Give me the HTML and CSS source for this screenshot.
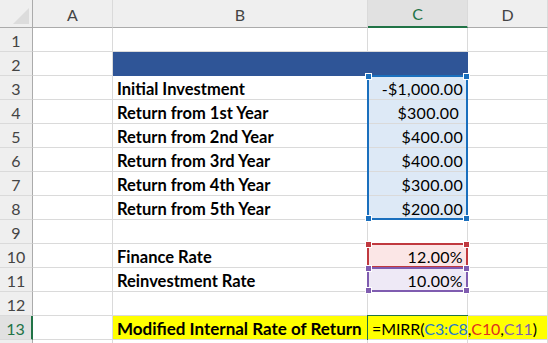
FILE: index.html
```html
<!DOCTYPE html>
<html lang="en">
<head>
    <meta charset="UTF-8">
    <title>MIRR - Sheet</title>
    <link rel="stylesheet" href="styles.css">
</head>
<body>
    <div class="sheet">
        <!-- column headers -->
        <div class="hd corner"><span class="tri"></span></div>
        <div class="hd">A</div>
        <div class="hd">B</div>
        <div class="hd active-col">C</div>
        <div class="hd">D</div>

        <div class="rh">1</div><div class="cell"></div><div class="cell"></div><div class="cell"></div><div class="cell"></div>

        <div class="rh">2</div><div class="cell"></div><div class="cell fill-blue"></div><div class="cell fill-blue"></div><div class="cell"></div>

        <div class="rh">3</div><div class="cell"></div><div class="cell label">Initial Investment</div><div class="cell num sel-blue">-$1,000.00</div><div class="cell"></div>
        <div class="rh">4</div><div class="cell"></div><div class="cell label">Return from 1st Year</div><div class="cell num sel-blue pad-more">$300.00</div><div class="cell"></div>
        <div class="rh">5</div><div class="cell"></div><div class="cell label">Return from 2nd Year</div><div class="cell num sel-blue">$400.00</div><div class="cell"></div>
        <div class="rh">6</div><div class="cell"></div><div class="cell label">Return from 3rd Year</div><div class="cell num sel-blue">$400.00</div><div class="cell"></div>
        <div class="rh">7</div><div class="cell"></div><div class="cell label">Return from 4th Year</div><div class="cell num sel-blue">$300.00</div><div class="cell"></div>
        <div class="rh">8</div><div class="cell"></div><div class="cell label">Return from 5th Year</div><div class="cell num sel-blue">$200.00</div><div class="cell"></div>

        <div class="rh">9</div><div class="cell"></div><div class="cell"></div><div class="cell"></div><div class="cell"></div>

        <div class="rh">10</div><div class="cell"></div><div class="cell label">Finance Rate</div><div class="cell num sel-red">12.00%</div><div class="cell"></div>
        <div class="rh">11</div><div class="cell"></div><div class="cell label">Reinvestment Rate</div><div class="cell num sel-purple">10.00%</div><div class="cell"></div>

        <div class="rh">12</div><div class="cell"></div><div class="cell"></div><div class="cell"></div><div class="cell"></div>

        <div class="rh active-row">13</div><div class="cell"></div><div class="cell label big hl">Modified Internal Rate of Return</div><div class="cell hl formula">=MIRR(<span class="ref-blue">C3:C8</span>,<span class="ref-red">C10</span>,<span class="ref-purple">C11</span>)</div><div class="cell hl-tail"></div>

        <div class="rh"></div><div class="cell"></div><div class="cell"></div><div class="cell"></div><div class="cell"></div>

        <!-- range outlines (lie over the cells) -->
        <div class="range range-blue">
            <i class="handle tl"></i><i class="handle tr"></i><i class="handle bl"></i><i class="handle br"></i>
        </div>
        <div class="range range-red">
            <i class="handle tl"></i><i class="handle tr"></i>
        </div>
        <div class="range range-purple">
            <i class="handle tl"></i><i class="handle tr"></i><i class="handle bl"></i><i class="handle br"></i>
        </div>
        <div class="edit-box"></div>
    </div>
</body>
</html>
```

FILE: styles.css
```css
:root {
    --grid: #dadada;
    --head-bg: #efefef;
    --head-line: #ababab;
    --excel-green: #217346;
    --blue: #1a6fbd;
    --red: #c0393f;
    --purple: #7f5cb0;
}

* {
    margin: 0;
    padding: 0;
    box-sizing: border-box;
}

body {
    font-family: "Lato", "Liberation Sans", sans-serif;
    background: #fff;
    color: #000;
    overflow: hidden;
}

.sheet {
    position: relative;
    display: grid;
    grid-template-columns: 33px 80px 255px 100px 1fr;
    grid-template-rows: 28px repeat(14, 24px);
    width: 548px;
    height: 343px;
    overflow: hidden;
}

.hd,
.rh {
    background: var(--head-bg);
    color: #444;
    font-size: 16px;
    display: flex;
    align-items: center;
    justify-content: center;
    padding-top: 1px;
}

.hd {
    border-right: 1px solid var(--grid);
    border-bottom: 1px solid var(--head-line);
}

.rh {
    border-right: 1px solid var(--head-line);
    border-bottom: 1px solid var(--grid);
}

.corner {
    border-right: 1px solid var(--head-line);
    position: relative;
}

.tri {
    position: absolute;
    right: 3px;
    bottom: 3px;
    width: 0;
    height: 0;
    border-left: 16px solid transparent;
    border-bottom: 16px solid #dcdcdc;
}

.active-col {
    background: #e1e1e1;
    color: var(--excel-green);
    border-bottom: 2px solid var(--excel-green);
}

.active-row {
    background: #e1e1e1;
    color: var(--excel-green);
    border-right: 2px solid var(--excel-green);
}

.cell {
    border-right: 1px solid var(--grid);
    border-bottom: 1px solid var(--grid);
    font-size: 16px;
    display: flex;
    align-items: center;
    padding: 2px 4px 0;
    white-space: nowrap;
}

.label {
    font-weight: bold;
    font-size: 16.5px;
}

.big {
    font-size: 17px;
}

.num {
    justify-content: flex-end;
    letter-spacing: 0.3px;
    padding-right: 4px;
}

.pad-more {
    padding-right: 8px;
}

.sel-blue { background: #dde9f6; }
.sel-red { background: #fbe6e6; }
.sel-purple { background: #eee9f6; }

.fill-blue {
    background: #2f5597;
    border-color: #2f5597;
}

.hl {
    background: #ffff00;
}

.hl-tail {
    background: linear-gradient(to right, #ffff00 79px, #fff 79px);
}

.formula {
    overflow: visible;
    padding-left: 4px;
    font-size: 16px;
    letter-spacing: -0.1px;
    position: relative;
    z-index: 2;
}

.ref-blue { color: #2277cc; }
.ref-red { color: #e0301e; }
.ref-purple { color: #7f5faf; }

/* range outlines drawn over the grid */
.range {
    position: absolute;
    grid-column: 4 / 5;
    top: -1px;
    left: -1px;
    right: 0;
    bottom: 0;
    border: 2px solid;
    z-index: 1;
}

.range-blue {
    grid-row: 4 / 10;
    border-color: var(--blue);
}

.range-red {
    grid-row: 11 / 12;
    border-color: var(--red);
}

.range-purple {
    grid-row: 12 / 13;
    border-color: var(--purple);
}

.handle {
    position: absolute;
    width: 7px;
    height: 7px;
    border: 1px solid #fff;
    background: currentColor;
}

.range-blue .handle { color: var(--blue); }
.range-red .handle { color: var(--red); }
.range-purple .handle { color: var(--purple); }

.tl { top: -4px; left: -4px; }
.tr { top: -4px; right: -4px; }
.bl { bottom: -4px; left: -4px; }
.br { bottom: -4px; right: -4px; }

.edit-box {
    position: absolute;
    grid-column: 4 / 5;
    grid-row: 14 / 15;
    top: -1px;
    left: -1px;
    right: 0;
    bottom: 0;
    border: 2px solid var(--excel-green);
    z-index: 1;
}
```
